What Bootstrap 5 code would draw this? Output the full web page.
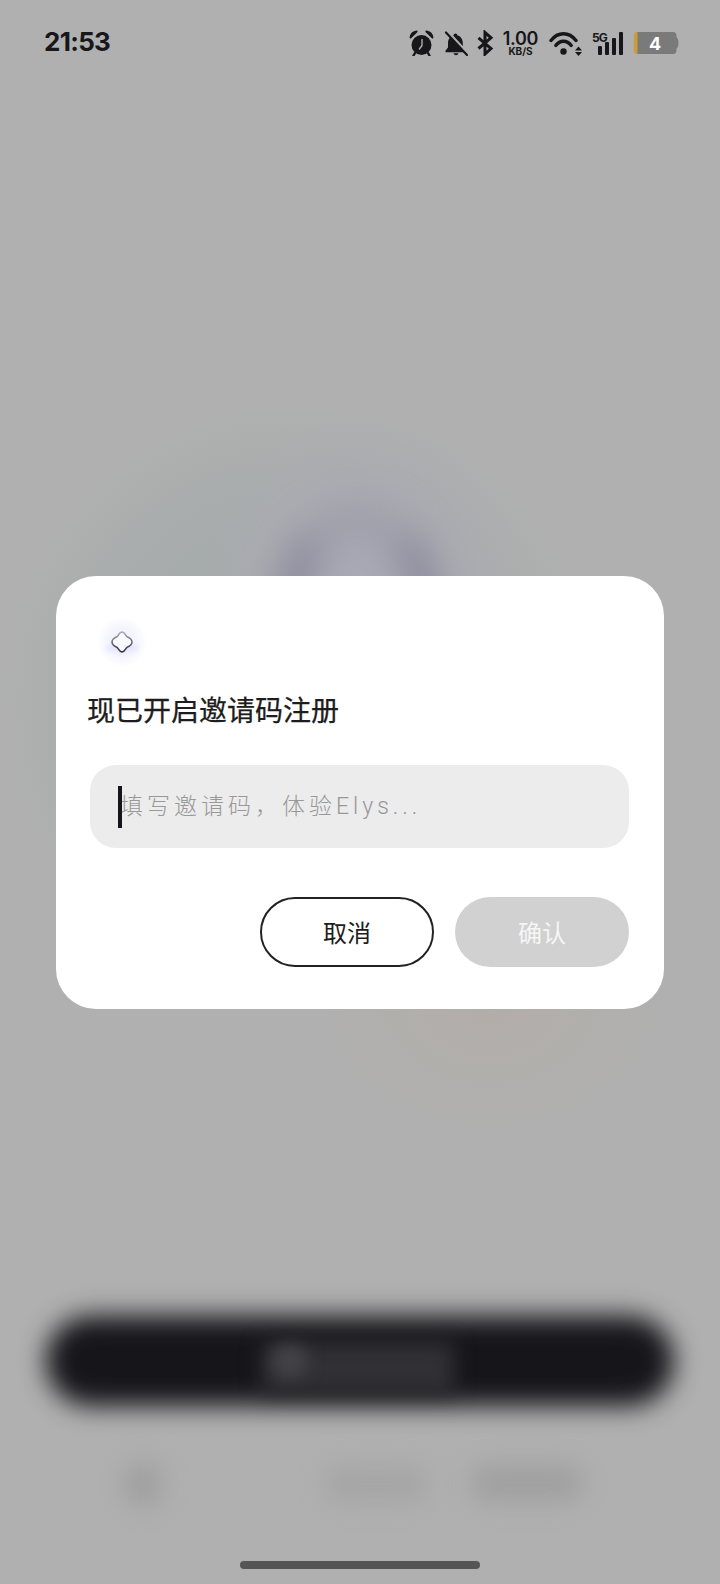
<!DOCTYPE html>
<html lang="zh-CN">
<head>
    <meta charset="UTF-8">
    <title>邀请码注册</title>
    <link href="https://cdn.jsdelivr.net/npm/bootstrap@5.3.3/dist/css/bootstrap.min.css" rel="stylesheet">
    <style>
        body { background: #b0b0b0; font-family: "Noto Sans CJK SC", "Noto Sans", sans-serif; }
        .phone-screen { width: 720px; height: 1584px; background: #b0b0b0; overflow: hidden; }

        /* blurred page behind the dialog */
        .backdrop-layer { inset: 0; }
        .blur-shape { position: absolute; }
        .glow-green { left: 0; top: 400px; width: 600px; height: 600px; border-radius: 50%; background: radial-gradient(circle closest-side, #a3a9a9 0%, #a6abab 60%, rgba(176,176,176,0) 100%); }
        .glow-lilac { left: 200px; top: 420px; width: 320px; height: 320px; border-radius: 50%; background: radial-gradient(circle closest-side, #a6a6b0 0%, #abacb2 55%, rgba(176,176,176,0) 100%); }
        .glow-peach { left: 320px; top: 880px; width: 340px; height: 250px; border-radius: 50%; background: radial-gradient(closest-side, #b3ada9 0%, #b1afac 55%, rgba(176,176,176,0) 100%); }
        .arch-ring { left: 270px; top: 500px; width: 176px; height: 235px; border-radius: 50%; border: 38px solid #918f9f; border-top-color: #a0a0ab; background: #a9a9b5; filter: blur(16px); }
        .cta-blur { left: 46px; top: 1316px; width: 628px; height: 90px; border-radius: 45px; background: #15151a; filter: blur(13px); }
        .cta-inner { left: 262px; top: 1342px; width: 192px; height: 52px; background: #313135; filter: blur(10px); }
        .cta-dot { left: 272px; top: 1344px; width: 36px; height: 34px; border-radius: 50%; background: #434347; filter: blur(8px); }
        .foot-blur { background: #a0a0a0; border-radius: 14px; filter: blur(12px); }
        .foot-a { left: 124px; top: 1462px; width: 38px; height: 44px; }
        .foot-b { left: 325px; top: 1466px; width: 102px; height: 36px; background: #a5a5a5; }
        .foot-c { left: 472px; top: 1464px; width: 110px; height: 38px; }

        .page-flow { z-index: 1; height: 1584px; }

        /* status bar */
        .status-strip { height: 84px; padding: 29px 41px 0 44px; color: #17171a; }
        .status-time { font-family: Inter, sans-serif; font-weight: 700; font-size: 26px; line-height: 26px; letter-spacing: -.7px; }
        .status-icons { height: 26px; margin-top: 1px; }
        .status-icons svg { display: block; flex: none; }
        .net-speed { width: 37px; margin: 0 10px 0 8px; font-family: Inter, sans-serif; text-align: center; }
        .net-speed b { display: block; font-size: 18px; line-height: 15px; font-weight: 600; letter-spacing: -.3px; }
        .net-speed i { display: block; font-style: normal; font-size: 10px; line-height: 10px; font-weight: 700; }
        .battery-num { font-family: Inter, sans-serif; font-size: 18px; font-weight: 700; }
        .tiny-5g { font-family: Inter, sans-serif; font-size: 12px; font-weight: 700; letter-spacing: -.8px; }

        /* dialog */
        .invite-dialog { width: 608px; height: 433px; margin: 492px 0 0 56px; border: 0; border-radius: 40px; background: #fff; padding: 0; }
        .brand-mark { margin: 36px 0 0 39px; width: 54px; height: 58px; }
        .invite-title { margin: 19px 0 0 31px; font-size: 28px; line-height: 40px; font-weight: 400; color: #1d1d20; -webkit-text-stroke: .25px #1d1d20; }
        .code-field { margin: 36px 35px 0 34px; height: 83px; }
        .code-input.form-control { height: 83px; background: #ececec; border: 0; border-radius: 26px; padding: 0 0 0 30px; font-family: Roboto, "Noto Sans CJK SC", sans-serif; font-size: 23px; font-weight: 300; letter-spacing: 4px; box-shadow: none; }
        .code-input.form-control::placeholder { color: #989898; opacity: 1; }
        .fake-caret { left: 28px; top: 21px; width: 4px; height: 42px; background: #15151c; }
        .action-row { margin: 49px 35px 0 0; gap: 21px; }
        .pill-btn.btn { width: 174px; height: 70px; padding: 0; border-radius: 35px; font-size: 24px; font-weight: 400; line-height: 1; }
        .pill-cancel.btn { background: #fff; border: 2px solid #222226; color: #1d1d20; }
        .pill-ok.btn, .pill-ok.btn:disabled { background: #d1d1d1; border: 0; color: #f6f6f6; opacity: 1; }

        .home-pill { width: 240px; height: 8px; margin: 552px 0 0 240px; background: #555; border-radius: 4px; }
    </style>
</head>
<body class="m-0">
<div class="phone-screen position-relative">
    <div class="backdrop-layer position-absolute">
        <div class="blur-shape glow-green"></div>
        <div class="blur-shape glow-lilac"></div>
        <div class="blur-shape glow-peach"></div>
        <div class="blur-shape arch-ring"></div>
        <div class="blur-shape cta-blur"></div>
        <div class="blur-shape cta-inner"></div>
        <div class="blur-shape cta-dot"></div>
        <div class="blur-shape foot-blur foot-a"></div>
        <div class="blur-shape foot-blur foot-b"></div>
        <div class="blur-shape foot-blur foot-c"></div>
    </div>

    <div class="page-flow position-relative d-flex flex-column">
        <div class="status-strip d-flex justify-content-between align-items-start">
            <div class="status-time">21:53</div>
            <div class="status-icons d-flex align-items-center">
                <!-- alarm -->
                <svg width="26" height="26" viewBox="0 0 26 26" fill="none">
                    <circle cx="13.500" cy="15" r="10" fill="#17171a"/>
                    <path d="M14 9.500v6l-2.600 3.500" stroke="#b0b0b0" stroke-width="1.400" stroke-linecap="round" stroke-linejoin="round"/>
                    <path d="M2.500 7.500C3 4.200 5.200 2 8.700 1.500ZM24.500 7.500C24 4.200 21.800 2 18.300 1.500Z" fill="#17171a" stroke="#17171a" stroke-width="1.800" stroke-linejoin="round"/>
                    <path d="M7 23 5.500 25.500M20 23l1.500 2.500" stroke="#17171a" stroke-width="2.400" stroke-linecap="round"/>
                </svg>
                <!-- muted bell -->
                <svg class="ms-2" width="26" height="26" viewBox="0 0 26 26" fill="none">
                    <path d="M15 3.500c-1 0-1.800.8-1.800 1.800-3.700 1-5.700 4-5.700 8v4.200L5 20.700v1.500h20v-1.500l-2.700-3.200v-4.200c0-4-2-7-5.500-8 0-1-.8-1.800-1.800-1.800Z" fill="#17171a" transform="translate(-1.500 0)"/>
                    <path d="M11.500 23.300a2.600 2.600 0 0 0 5 0Z" fill="#17171a"/>
                    <path d="M5 1 26 24" stroke="#b0b0b0" stroke-width="3"/>
                    <path d="M4 2.500 25 25" stroke="#17171a" stroke-width="2.200" stroke-linecap="round"/>
                </svg>
                <!-- bluetooth -->
                <svg class="ms-2" width="18" height="26" viewBox="0 0 18 26" fill="none">
                    <path d="M2.500 7.800 15 18.500 9 24V2.500l6 5.300L2.500 18.500" stroke="#17171a" stroke-width="3" stroke-linejoin="miter"/>
                </svg>
                <div class="net-speed"><b>1.00</b><i>KB/S</i></div>
                <!-- wifi with up/down arrows -->
                <svg width="35" height="26" viewBox="0 0 35 26" fill="none">
                    <path d="M2 10.500C9 1.500 20 1.500 27 10.500" stroke="#17171a" stroke-width="3.400" stroke-linecap="round"/>
                    <path d="M6.800 15.500C11 9.800 18 9.800 22.200 15.500" stroke="#17171a" stroke-width="3.400" stroke-linecap="round"/>
                    <circle cx="14.500" cy="21.500" r="3.200" fill="#17171a"/>
                    <path d="M29.500 16.500 26 20.500h7ZM29.500 26 26 22h7Z" fill="#17171a"/>
                </svg>
                <!-- 5G signal -->
                <svg class="ms-2" width="33" height="26" viewBox="0 0 33 26">
                    <text class="tiny-5g" x="0" y="12" fill="#17171a">5G</text>
                    <rect x="6" y="16" width="4" height="9" rx="1" fill="#17171a"/>
                    <rect x="13" y="12" width="4" height="13" rx="1" fill="#17171a"/>
                    <rect x="20" y="8" width="4" height="17" rx="1" fill="#17171a"/>
                    <rect x="27" y="2" width="4" height="23" rx="1" fill="#17171a"/>
                </svg>
                <!-- battery -->
                <svg class="ms-2" width="46" height="24" viewBox="0 0 46 24">
                    <path d="M4 1h36c2.500 0 3.500 1.500 3.500 4v1.500c1.300.5 2 3 2 5.500s-.7 5-2 5.500V19c0 2.500-1 4-3.500 4H4Z" fill="#7a7a7a"/>
                    <path d="M4.500 1H3.500A3 3 0 0 0 .8 4v16a3 3 0 0 0 2.700 3h1Z" fill="#c99d3e"/>
                    <text class="battery-num" x="22" y="18.500" text-anchor="middle" fill="#fff">4</text>
                </svg>
            </div>
        </div>

        <div class="invite-dialog card">
            <div class="brand-mark position-relative">
                <svg width="54" height="58" viewBox="0 0 54 58" fill="none">
                    <defs>
                        <radialGradient id="haloFill"><stop offset="0" stop-color="#ecedfb"/><stop offset=".6" stop-color="#f5f5fd"/><stop offset="1" stop-color="#fff"/></radialGradient>
                        <linearGradient id="petalEdge" x1="0" y1="0" x2="0" y2="1"><stop offset="0" stop-color="#aaa8b6"/><stop offset="1" stop-color="#2d2947"/></linearGradient>
                        <filter id="softBlur" x="-40%" y="-80%" width="180%" height="260%"><feGaussianBlur stdDeviation="2.500"/></filter>
                    </defs>
                    <ellipse cx="27" cy="30" rx="25" ry="25" fill="url(#haloFill)"/>
                    <ellipse cx="27" cy="36" rx="17" ry="3" fill="#dfe2f9" filter="url(#softBlur)"/>
                    <path d="M27 20C30 20 30.500 24 32.200 24.800 34 25.600 37 27 37 30 37 33 34 34.400 32.200 35.200 30.500 36 30 40 27 40 24 40 23.500 36 21.800 35.200 20 34.400 17 33 17 30 17 27 20 25.600 21.800 24.800 23.500 24 24 20 27 20Z" fill="#f8f8fe" stroke="url(#petalEdge)" stroke-width="1.500"/>
                </svg>
            </div>
            <div class="invite-title">现已开启邀请码注册</div>
            <div class="code-field position-relative">
                <input class="code-input form-control" type="text" placeholder="填写邀请码，体验Elys...">
                <span class="fake-caret position-absolute"></span>
            </div>
            <div class="action-row d-flex justify-content-end">
                <button type="button" class="pill-btn pill-cancel btn">取消</button>
                <button type="button" class="pill-btn pill-ok btn" disabled>确认</button>
            </div>
        </div>

        <div class="home-pill"></div>
    </div>
</div>
<script src="https://cdn.jsdelivr.net/npm/bootstrap@5.3.3/dist/js/bootstrap.bundle.min.js"></script>
</body>
</html>
